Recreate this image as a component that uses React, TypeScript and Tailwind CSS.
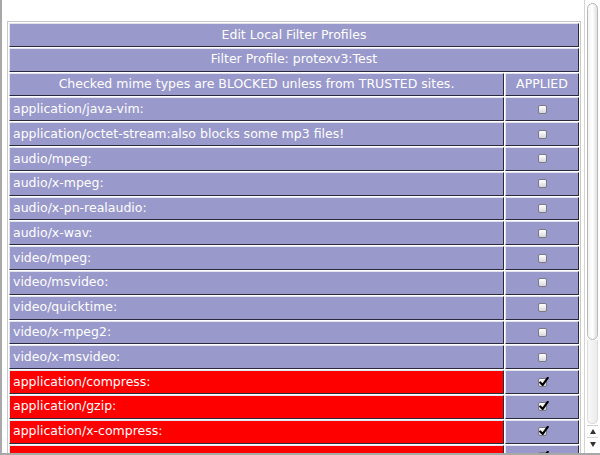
const rows: { label: string; blocked: boolean }[] = [
  { label: "application/java-vim:", blocked: false },
  { label: "application/octet-stream:also blocks some mp3 files!", blocked: false },
  { label: "audio/mpeg:", blocked: false },
  { label: "audio/x-mpeg:", blocked: false },
  { label: "audio/x-pn-realaudio:", blocked: false },
  { label: "audio/x-wav:", blocked: false },
  { label: "video/mpeg:", blocked: false },
  { label: "video/msvideo:", blocked: false },
  { label: "video/quicktime:", blocked: false },
  { label: "video/x-mpeg2:", blocked: false },
  { label: "video/x-msvideo:", blocked: false },
  { label: "application/compress:", blocked: true },
  { label: "application/gzip:", blocked: true },
  { label: "application/x-compress:", blocked: true },
  // next row is only a sliver at the bottom edge, its text falls below the fold
  { label: "", blocked: true },
];

const cell =
  "h-[23.8px] flex items-center border border-t-[#e4e4f0] border-l-[#e4e4f0] border-b-[#2a2a3a] border-r-[#2a2a3a] text-white";

const CheckBox = ({ checked }: { checked: boolean }) => (
  <div className="relative w-[9px] h-[9px] rounded-[2px] border border-[#7a7a86] bg-gradient-to-b from-white to-[#d8d8dc]">
    {checked && (
      <svg
        viewBox="0 0 12 12"
        className="absolute left-[0px] top-[-2px] w-[10px] h-[10px]"
      >
        <path
          d="M1.5 6.5 L4.5 9.5 L10.5 1"
          fill="none"
          stroke="#000"
          strokeWidth="2.6"
          strokeLinecap="round"
          strokeLinejoin="round"
        />
      </svg>
    )}
  </div>
);

const ScrollBar = () => (
  <div className="w-[16px] h-full flex flex-col bg-white border-l border-[#d4d4d4] pl-[2px] pr-[2px]">
    <div className="flex-1 flex flex-col pt-[3px]">
      <div className="h-[337px] w-[11px] rounded-full border border-[#b8b8b8] bg-gradient-to-r from-[#f4f4f4] via-white to-[#e0e0e0]" />
      <div className="h-[84px] w-[11px] rounded-b-full border border-t-0 border-[#dcdcdc] bg-gradient-to-r from-[#f8f8f8] to-[#ececec]" />
    </div>
    <div className="h-[28px] flex flex-col items-center border-t border-[#d0d0d0]">
      <div className="h-[12px] w-full flex items-center justify-center border-b border-[#d8d8d8]">
        <div className="w-0 h-0 border-l-[3px] border-r-[3px] border-b-[5px] border-l-transparent border-r-transparent border-b-[#333]" />
      </div>
      <div className="h-[12px] w-full flex items-center justify-center">
        <div className="w-0 h-0 border-l-[3px] border-r-[3px] border-t-[5px] border-l-transparent border-r-transparent border-t-[#333]" />
      </div>
    </div>
  </div>
);

export default function App() {
  return (
    <div
      className="w-[600px] h-[455px] flex bg-white overflow-hidden border-l-2 border-b-2 border-[#a8a8a8]"
      style={{ fontFamily: '"DejaVu Sans", Verdana, sans-serif' }}
    >
      <div className="w-[582px] h-full overflow-hidden pl-[5px] pt-[21px]">
        <div className="w-[574px] border border-[#c8c8c8] p-px flex flex-col gap-px bg-white text-[12.5px]">
          <div className={`${cell} justify-center bg-[#9999cc]`}>
            Edit Local Filter Profiles
          </div>
          <div className={`${cell} justify-center bg-[#9999cc]`}>
            Filter Profile: protexv3:Test
          </div>
          <div className="flex gap-px">
            <div className={`${cell} w-[495px] justify-center bg-[#9999cc]`}>
              Checked mime types are BLOCKED unless from TRUSTED sites.
            </div>
            <div className={`${cell} w-[74px] justify-center bg-[#9999cc]`}>
              APPLIED
            </div>
          </div>
          {rows.map((r, i) => (
            <div key={i} className="flex gap-px">
              <div
                className={`${cell} w-[495px] pl-[3px] ${
                  r.blocked ? "bg-[#ff0000]" : "bg-[#9999cc]"
                }`}
              >
                {r.label}
              </div>
              <div className={`${cell} w-[74px] justify-center bg-[#9999cc]`}>
                <CheckBox checked={r.blocked} />
              </div>
            </div>
          ))}
        </div>
      </div>
      <ScrollBar />
    </div>
  );
}
